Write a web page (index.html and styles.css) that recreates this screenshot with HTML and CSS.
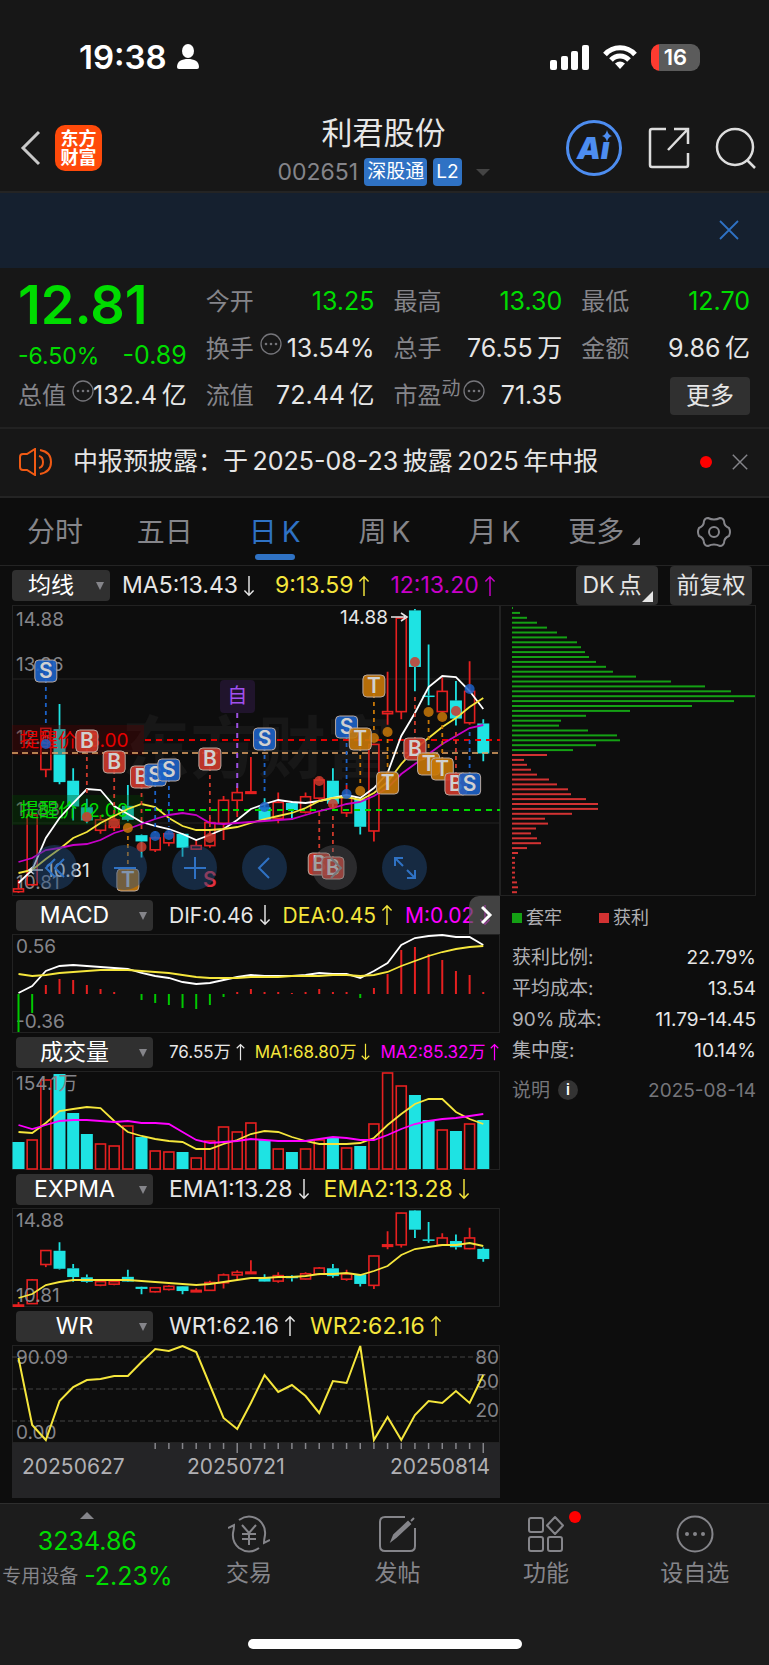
FILE: index.html
```
<!DOCTYPE html>
<html lang="zh-CN">
<head>
  <meta charset="UTF-8">
  <meta name="viewport" content="width=device-width, initial-scale=1.0">
  <title>利君股份 002651</title>
  <link rel="stylesheet" href="styles.css">
</head>
<body>
  <svg class="sprite" aria-hidden="true">
    <symbol id="up" viewBox="0 0 12 24"><path d="M6 23V2M1 7l5-5 5 5" fill="none" stroke="currentColor" stroke-width="1.6"/></symbol>
    <symbol id="down" viewBox="0 0 12 24"><path d="M6 1v21M1 17l5 5 5-5" fill="none" stroke="currentColor" stroke-width="1.6"/></symbol>
    <symbol id="dots" viewBox="0 0 22 22"><circle cx="11" cy="11" r="10" fill="none" stroke="currentColor" stroke-width="1.3"/><g fill="currentColor"><circle cx="6" cy="11" r="1.3"/><circle cx="11" cy="11" r="1.3"/><circle cx="16" cy="11" r="1.3"/></g></symbol>
    <symbol id="close" viewBox="0 0 20 20"><path d="M1 1l18 18M19 1L1 19" fill="none" stroke="currentColor" stroke-width="1.8"/></symbol>
  </svg>

  <header class="header">
    <div class="status">
      <span class="time">19:38</span>
      <svg class="person" width="24" height="26" viewBox="0 0 24 26" fill="#fff"><ellipse cx="12" cy="7" rx="6" ry="7"/><path d="M1 23c0-6 5-8 11-8s11 2 11 8q0 2-2 2H3q-2 0-2-2z"/></svg>
      <div class="status-right">
        <svg width="39" height="25" viewBox="0 0 39 25" fill="#fff"><rect y="15" width="7" height="10" rx="2"/><rect x="11" y="11" width="7" height="14" rx="2"/><rect x="21" y="6" width="7" height="19" rx="2"/><rect x="32" width="7" height="25" rx="2"/></svg>
        <svg width="34" height="25" viewBox="0 0 34 25" fill="none" stroke="#fff" stroke-width="5"><path d="M2 9.500C10 .5 24 .5 32 9.500"/><path d="M8 15c5-5.500 13-5.500 18 0"/><path d="M17 24l-5-5.500q5-4 10 0z" fill="#fff" stroke="none"/></svg>
        <span class="battery">16</span>
      </div>
    </div>
    <div class="title-bar">
      <button class="icon-btn" aria-label="返回"><svg width="22" height="36" viewBox="0 0 22 36"><path d="M20 2L4 18l16 16" fill="none" stroke="#c8c8c8" stroke-width="3"/></svg></button>
      <a class="logo" href="#">东方<br>财富</a>
      <div class="stock">
        <h1>利君股份</h1>
        <div class="stock-sub">
          <span>002651</span>
          <span class="tag">深股通</span>
          <span class="tag">L2</span>
          <i class="caret"></i>
        </div>
      </div>
      <div class="actions">
        <button class="icon-btn" aria-label="Ai"><svg width="58" height="58" viewBox="0 0 58 58"><circle cx="29" cy="29" r="26.500" fill="none" stroke="#4d8df0" stroke-width="3"/><g fill="#4d8df0"><text x="12" y="40" class="ai">Aı</text><path d="M42 11q1 5 5 6-4 1-5 6-1-5-5-6 4-1 5-6z"/></g></svg></button>
        <button class="icon-btn" aria-label="分享"><svg width="42" height="42" viewBox="0 0 42 42" fill="none" stroke="#ddd" stroke-width="2.500"><path d="M18 2H4q-2 0-2 2v34q0 2 2 2h34q2 0 2-2V26M26 2h14v15M40 2L20 23"/></svg></button>
        <button class="icon-btn" aria-label="搜索"><svg width="42" height="42" viewBox="0 0 42 42" fill="none" stroke="#ddd" stroke-width="2.500"><circle cx="20" cy="20" r="18"/><path d="M32 33l8 8"/></svg></button>
      </div>
    </div>
  </header>

  <div class="banner">
    <button class="icon-btn" aria-label="关闭"><svg width="20" height="20"><use href="#close"/></svg></button>
  </div>

  <section class="quote">
    <div class="price">12.81</div>
    <div class="change"><span>-6.50%</span><span class="diff">-0.89</span></div>
    <div class="item"><span class="name">今开</span><b class="down">13.25</b></div>
    <div class="item"><span class="name">最高</span><b class="down">13.30</b></div>
    <div class="item"><span class="name">最低</span><b class="down">12.70</b></div>
    <div class="item"><span class="name">换手</span><svg class="dots"><use href="#dots"/></svg><b>13.54%</b></div>
    <div class="item"><span class="name">总手</span><b>76.55&thinsp;万</b></div>
    <div class="item"><span class="name">金额</span><b>9.86&thinsp;亿</b></div>
    <div class="item"><span class="name">总值</span><svg class="dots"><use href="#dots"/></svg><b>132.4&thinsp;亿</b></div>
    <div class="item"><span class="name">流值</span><b>72.44&thinsp;亿</b></div>
    <div class="item"><span class="name">市盈<sup>动</sup></span><svg class="dots tight"><use href="#dots"/></svg><b>71.35</b></div>
    <div class="item"><button class="more">更多</button></div>
  </section>

  <div class="notice">
    <svg width="34" height="28" viewBox="0 0 34 28" fill="none" stroke="#f05a14" stroke-width="2"><path d="M16 1v26l-8-5H4q-3 0-3-3V9q0-3 3-3h4zM20 8q4 1 4 6t-4 6M21 2q11 2 11 12T21 26"/></svg>
    <a href="#">中报预披露：于&thinsp;2025-08-23&thinsp;披露&thinsp;2025&thinsp;年中报</a>
    <i class="red-dot"></i>
    <button class="icon-btn" aria-label="关闭"><svg width="16" height="16"><use href="#close"/></svg></button>
  </div>

  <nav class="tabs">
    <button>分时</button>
    <button>五日</button>
    <button class="active">日&thinsp;K</button>
    <button>周&thinsp;K</button>
    <button>月&thinsp;K</button>
    <button>更多<i class="corner"></i></button>
    <button aria-label="设置"><svg width="34" height="32" viewBox="0 0 34 32" fill="none" stroke="#85858a" stroke-width="2"><path d="M11 2q6 3 12 0 3 0 4 3 0 5 5 7 2 4 0 8-5 2-5 7-1 3-4 3-6-3-12 0-3 0-4-3 0-5-5-7-2-4 0-8 5-2 5-7 1-3 4-3z"/><circle cx="17" cy="16" r="5"/></svg></button>
  </nav>

  <div class="ma-bar">
    <span class="picker small"><select aria-label="主图指标"><option>均线</option></select></span>
    <span class="val">MA5:13.43<svg><use href="#down"/></svg></span>
    <span class="val yellow">9:13.59<svg><use href="#up"/></svg></span>
    <span class="val dark-magenta">12:13.20<svg><use href="#up"/></svg></span>
    <button class="opt first">DK&thinsp;点<i class="corner"></i></button>
    <button class="opt">前复权</button>
  </div>

  <main class="board">
    <div class="charts">
      <div class="kline">
        <svg id="kline" viewBox="0 0 488 291"></svg>
        <div class="tools">
          <button aria-label="最早"><svg viewBox="0 0 24 24"><path d="M12 3l-9 9 9 9M21 3l-9 9 9 9"/></svg></button>
          <button aria-label="缩小"><svg viewBox="0 0 24 24"><path d="M1 12h22"/></svg></button>
          <button aria-label="放大"><svg viewBox="0 0 24 24"><path d="M1 12h22M12 1v22"/></svg></button>
          <button aria-label="向左"><svg viewBox="0 0 24 24"><path d="M16 2L6 12l10 10"/></svg></button>
          <button class="off" aria-label="向右"><svg viewBox="0 0 24 24"><path d="M8 2l10 10L8 22"/></svg></button>
          <button aria-label="全屏"><svg viewBox="0 0 24 24"><path d="M2 10V2h8M2 2l8 8M22 14v8h-8M22 22l-8-8"/></svg></button>
        </div>
      </div>

      <div class="ind-bar macd">
        <span class="picker"><select aria-label="指标一"><option>MACD</option></select></span>
        <span class="val">DIF:0.46<svg><use href="#down"/></svg></span>
        <span class="val yellow">DEA:0.45<svg><use href="#up"/></svg></span>
        <span class="val magenta">M:0.02<svg><use href="#down"/></svg></span>
        <button class="expand" aria-label="展开"><svg width="12" height="20" viewBox="0 0 12 20"><path d="M1 2l8 8-8 8" fill="none" stroke="#fff" stroke-width="3"/></svg></button>
      </div>
      <svg id="macd" viewBox="0 0 488 99"></svg>

      <div class="ind-bar volume">
        <span class="picker"><select aria-label="指标二"><option>成交量</option></select></span>
        <span class="val">76.55万<svg><use href="#up"/></svg></span>
        <span class="val yellow">MA1:68.80万<svg><use href="#down"/></svg></span>
        <span class="val magenta">MA2:85.32万<svg><use href="#up"/></svg></span>
      </div>
      <svg id="volume" viewBox="0 0 488 99"></svg>

      <div class="ind-bar">
        <span class="picker"><select aria-label="指标三"><option>EXPMA</option></select></span>
        <span class="val">EMA1:13.28<svg><use href="#down"/></svg></span>
        <span class="val yellow">EMA2:13.28<svg><use href="#down"/></svg></span>
      </div>
      <svg id="expma" viewBox="0 0 488 99"></svg>

      <div class="ind-bar">
        <span class="picker"><select aria-label="指标四"><option>WR</option></select></span>
        <span class="val">WR1:62.16<svg><use href="#up"/></svg></span>
        <span class="val yellow">WR2:62.16<svg><use href="#up"/></svg></span>
      </div>
      <svg id="wr" viewBox="0 0 488 98"></svg>
      <div class="axis">
        <svg id="ticks" viewBox="0 0 488 10"></svg>
        <div class="dates"><span>20250627</span><span>20250721</span><span>20250814</span></div>
      </div>
    </div>

    <aside class="chips">
      <svg id="chips" viewBox="0 0 256 291"></svg>
      <div class="legend"><span class="trapped">套牢</span><span class="profit">获利</span></div>
      <dl>
        <div><dt>获利比例:</dt><dd>22.79%</dd></div>
        <div><dt>平均成本:</dt><dd>13.54</dd></div>
        <div><dt>90%&thinsp;成本:</dt><dd>11.79-14.45</dd></div>
        <div><dt>集中度:</dt><dd>10.14%</dd></div>
      </dl>
      <div class="explain"><span>说明</span><i class="info">i</i><time>2025-08-14</time></div>
    </aside>
  </main>

  <footer class="footer">
    <nav class="bottom">
      <a class="sector" href="#">
        <i class="caret-up"></i>
        <span class="index">3234.86</span>
        <span class="sector-row"><small>专用设备</small>-2.23%</span>
      </a>
      <a href="#"><svg viewBox="0 0 42 38" fill="none" stroke="#85858a" stroke-width="2"><path d="M11 5Q21-2 31 5q7 6 6 15-1 5-1 8l6-3M31 33q-10 7-20 0-7-6-6-15 1-4 1-8l-6 3"/><path d="M14 10l7 8 7-8M21 18v12M14 19h14M14 24h14"/></svg>交易</a>
      <a href="#"><svg viewBox="0 0 42 38" fill="none" stroke="#85858a" stroke-width="2"><path d="M28 2H8Q3 2 3 7v24q0 5 5 5h25q5 0 5-5V13"/><path d="M34 6l3-3M15 25l2-5L31 7l2 2-14 13z" fill="#85858a"/></svg>发帖</a>
      <a href="#"><svg viewBox="0 0 42 38" fill="none" stroke="#85858a" stroke-width="2"><rect x="4" y="3" width="14" height="14" rx="2"/><rect x="4" y="22" width="14" height="14" rx="2"/><rect x="23" y="22" width="14" height="14" rx="2"/><path d="M30 2l8 8.500-8 8.500-8-8.500z" stroke-linejoin="round"/></svg>功能<i class="red-dot"></i></a>
      <a href="#"><svg viewBox="0 0 42 38" fill="none" stroke="#85858a" stroke-width="2"><circle cx="21" cy="19" r="17.500"/><g fill="#85858a" stroke="none"><circle cx="13" cy="19" r="2"/><circle cx="21" cy="19" r="2"/><circle cx="29" cy="19" r="2"/></g></svg>设自选</a>
    </nav>
    <div class="home"></div>
  </footer>
  <script src="script.js"></script>
</body>
</html>
```
FILE: styles.css
```
* {
  box-sizing: border-box;
}
body {
  margin: 0;
  background: #0d0d0d;
  color: #e6e6e6;
  font-family: Inter, "Noto Sans CJK SC", sans-serif;
  font-size: 22px;
  line-height: 1;
}
button {
  padding: 0;
  border: none;
  background: none;
  color: inherit;
  font: inherit;
  cursor: pointer;
}
a {
  color: inherit;
  text-decoration: none;
}
svg {
  display: block;
}
.sprite {
  display: none;
}
.icon-btn {
  display: flex;
}

/* header */
.header {
  background: #171717;
  border-bottom: 2px solid #242424;
}
.status {
  display: flex;
  align-items: center;
  height: 114px;
  padding: 0 69px 0 79px;
}
.time {
  margin-right: 9px;
  color: #fff;
  font-size: 33px;
  font-weight: 600;
  line-height: 36px;
}
.status-right {
  display: flex;
  align-items: center;
  gap: 14px;
  margin-left: auto;
}
.battery {
  width: 49px;
  border-radius: 9px;
  background: linear-gradient(90deg, #ff3b30 8px, #5b5b5b 8px);
  color: #fff;
  font-size: 22px;
  font-weight: 600;
  line-height: 27px;
  text-align: center;
}
.title-bar {
  display: flex;
  align-items: center;
  height: 77px;
  padding: 0 12px 10px 19px;
}
.logo {
  width: 47px;
  margin-left: 14px;
  padding: 4px 0;
  border-radius: 10px;
  background: #ff4a0a;
  color: #fff;
  font-size: 18px;
  font-weight: 700;
  line-height: 19px;
  text-align: center;
}
.stock {
  display: flex;
  flex: 1;
  flex-direction: column;
  align-items: center;
  gap: 10px;
  padding: 8px 0 0 100px;
}
.stock h1 {
  margin: 0;
  font-size: 31px;
  font-weight: 400;
}
.stock-sub {
  display: flex;
  align-items: center;
  gap: 6px;
  color: #85858a;
  font-size: 23px;
}
.tag {
  padding: 0 3px;
  border-radius: 4px;
  background: #2f72c4;
  color: #fff;
  font-size: 19px;
  line-height: 28px;
}
.caret {
  margin-left: 8px;
  border: 7px solid transparent;
  border-top-color: #444;
  border-bottom: none;
}
.actions {
  display: flex;
  align-items: center;
  gap: 25px;
}
.ai {
  font-size: 30px;
  font-style: italic;
  font-weight: 900;
}
.banner {
  display: flex;
  align-items: center;
  justify-content: flex-end;
  height: 75px;
  padding: 0 30px 2px 0;
  background: #15202f;
  color: #2f72c4;
}

/* quote */
.quote {
  display: grid;
  grid-template-columns: repeat(4, 1fr);
  grid-template-rows: repeat(3, 47px);
  column-gap: 19px;
  padding: 10px 19px 8px 18px;
  background: #171717;
  border-bottom: 2px solid #222;
}
.price {
  grid-area: 1 / 1;
  color: #00dc00;
  font-size: 54px;
  font-weight: 600;
  line-height: 54px;
}
.change {
  display: flex;
  grid-area: 2 / 1;
  align-items: flex-end;
  justify-content: space-between;
  padding-bottom: 4px;
  color: #00dc00;
  font-size: 23px;
}
.diff {
  font-size: 25px;
}
.item {
  display: flex;
  align-items: center;
  white-space: nowrap;
}
.item .name {
  color: #85858a;
  font-size: 24px;
}
.item sup {
  font-size: 19px;
  line-height: 0;
}
.item b {
  margin-left: auto;
  font-size: 25px;
  font-weight: 400;
}
.item b.down {
  color: #00dc00;
}
.dots {
  flex: none;
  width: 22px;
  height: 22px;
  margin: 0 -8px 10px 6px;
  color: #75757a;
}
.dots.tight {
  margin-left: 2px;
}
.more {
  margin-left: auto;
  padding: 0 16px;
  border-radius: 4px;
  background: #303030;
  font-size: 24px;
  line-height: 38px;
}
.notice {
  display: flex;
  align-items: center;
  height: 69px;
  padding: 0 21px 2px 19px;
  background: #171717;
  border-bottom: 2px solid #242424;
  color: #85858a;
}
.notice a {
  margin: 0 auto 0 20px;
  color: #e6e6e6;
  font-size: 25px;
}
.notice .icon-btn {
  margin-left: 20px;
}
.red-dot {
  width: 12px;
  height: 12px;
  border-radius: 50%;
  background: #f00;
}

/* period tabs */
.tabs {
  display: grid;
  grid-template-columns: repeat(7, 1fr);
  height: 68px;
  border-bottom: 1px solid #242424;
  color: #85858a;
  font-size: 28px;
}
.tabs button {
  position: relative;
  display: flex;
  align-items: center;
  justify-content: center;
}
.tabs .active {
  color: #2f72c4;
}
.tabs .active::after {
  content: "";
  position: absolute;
  bottom: 5px;
  width: 40px;
  height: 6px;
  border-radius: 3px;
  background: #2f72c4;
}
.corner {
  align-self: flex-end;
  margin: 0 0 20px 8px;
  border-bottom: 8px solid currentColor;
  border-left: 8px solid transparent;
}

/* indicator rows */
.ma-bar {
  display: flex;
  align-items: center;
  height: 39px;
  padding: 0 17px 0 12px;
}
.picker {
  position: relative;
  flex: none;
  width: 137px;
  margin-right: 16px;
}
.picker.small {
  width: 98px;
  margin-right: 12px;
}
.picker select {
  width: 100%;
  height: 31px;
  padding: 0 20px 0 0;
  appearance: none;
  border: none;
  border-radius: 4px;
  background: #303030;
  color: #fff;
  font: inherit;
  font-size: 23px;
  text-align-last: center;
}
.picker::after {
  content: "";
  position: absolute;
  top: 12px;
  right: 6px;
  border: 4px solid transparent;
  border-top: 8px solid #85858a;
  border-bottom: none;
}
.val {
  display: flex;
  flex: none;
  align-items: center;
  gap: 5px;
  margin-right: 14px;
  font-size: 23px;
  white-space: nowrap;
}
.ma-bar .val {
  margin-right: 20px;
}
.val svg {
  width: 12px;
  height: 22px;
}
.yellow {
  color: #f5e63c;
}
.magenta {
  color: #f0f;
}
.dark-magenta {
  color: #c800c8;
}
.opt {
  position: relative;
  width: 82px;
  height: 39px;
  margin-left: 12px;
  border-radius: 4px;
  background: #303030;
  font-size: 23px;
  white-space: nowrap;
}
.opt.first {
  padding-right: 10px;
  margin-left: auto;
}
.opt .corner {
  position: absolute;
  right: 5px;
  bottom: 3px;
  margin: 0;
  border-bottom-width: 11px;
  border-left-width: 11px;
}
.ind-bar {
  position: relative;
  display: flex;
  align-items: center;
  height: 38px;
  padding-left: 4px;
}
.macd .val {
  margin-right: 12px;
  font-size: 21px;
}
.volume .val {
  margin-right: 10px;
  font-size: 17px;
}
.volume .val svg {
  width: 9px;
  height: 18px;
}
.expand {
  position: absolute;
  top: 0;
  right: 0;
  width: 31px;
  height: 38px;
  padding-left: 12px;
  border-radius: 10px 0 0 0;
  background: rgba(90, 90, 90, 0.7);
}

/* charts */
.board {
  display: grid;
  grid-template-columns: 488fr 256fr;
  align-items: start;
  padding: 0 13px 5px 12px;
}
.charts > svg,
.kline > svg,
.chips > svg,
.axis > svg {
  width: 100%;
  height: auto;
}
.charts,
.chips {
  min-width: 0;
}
.kline {
  position: relative;
}
.tools {
  position: absolute;
  bottom: 6px;
  left: 20px;
  display: flex;
  gap: 25px;
}
.tools button {
  display: flex;
  align-items: center;
  justify-content: center;
  width: 45px;
  height: 45px;
  border-radius: 50%;
  background: rgba(33, 78, 130, 0.45);
}
.tools svg {
  width: 24px;
  height: 24px;
  fill: none;
  stroke: #2f72c4;
  stroke-width: 2;
}
.tools .off {
  background: rgba(90, 90, 95, 0.4);
}
.tools .off svg {
  stroke: #777;
}
.frame {
  fill: none;
  stroke: #222;
}
.label {
  fill: #85858a;
  font-size: 19px;
}
.white-label {
  fill: #e6e6e6;
  font-size: 19px;
}
.watermark {
  fill: #171717;
  font-size: 68px;
  font-weight: 700;
}
.alert {
  font-size: 19px;
}
.badge {
  font-size: 21px;
  font-weight: 600;
  text-anchor: middle;
}
.badge.plain {
  font-size: 20px;
  font-weight: 400;
}
.axis {
  padding-bottom: 20px;
  background: #242426;
}
.dates {
  display: grid;
  grid-template-columns: 165fr 180fr 123fr;
  padding: 3px 10px 0;
  color: #b0b0b4;
  font-size: 21px;
  line-height: 22px;
}
.dates span:last-child {
  text-align: right;
}

/* cost distribution */
.legend {
  display: flex;
  gap: 37px;
  padding: 12px 12px 0;
  color: #b0b0b4;
  font-size: 18px;
  line-height: 19px;
}
.legend span {
  display: flex;
  align-items: center;
  gap: 4px;
}
.legend span::before {
  content: "";
  width: 10px;
  height: 10px;
  background: #14a014;
}
.legend .profit::before {
  background: #d23232;
}
.chips dl {
  margin: 15px 0 0;
  padding-left: 12px;
  font-size: 19px;
  line-height: 31px;
}
.chips dl div {
  display: flex;
  justify-content: space-between;
}
.chips dt {
  color: #b0b0b4;
}
.chips dd {
  margin: 0;
}
.explain {
  display: flex;
  align-items: center;
  gap: 8px;
  padding: 14px 0 0 12px;
  color: #75757a;
  font-size: 19px;
}
.explain time {
  margin-left: auto;
}
.info {
  width: 20px;
  border-radius: 50%;
  background: #333;
  color: #fff;
  font-size: 15px;
  font-style: normal;
  font-weight: 600;
  line-height: 20px;
  text-align: center;
}

/* bottom bar */
.footer {
  padding-bottom: 17px;
  background: #1c1c1c;
  border-top: 1px solid #2e2e2e;
}
.bottom {
  display: grid;
  grid-template-columns: 174fr repeat(4, 148fr);
  height: 135px;
}
.bottom a {
  position: relative;
  display: flex;
  flex-direction: column;
  align-items: center;
  gap: 9px;
  padding-top: 11px;
  color: #85858a;
  font-size: 23px;
}
.bottom a > svg {
  width: 42px;
  height: 38px;
}
.bottom .red-dot {
  position: absolute;
  top: 7px;
  left: calc(50% + 23px);
}
.bottom .sector {
  gap: 10px;
  padding-top: 8px;
  color: #00dc00;
  font-size: 25px;
}
.caret-up {
  border: 7px solid transparent;
  border-top: none;
  border-bottom-color: #85858a;
}
.sector-row {
  display: flex;
  align-items: center;
  gap: 6px;
  white-space: nowrap;
}
.sector-row small {
  color: #85858a;
  font-size: 19px;
}
.home {
  width: 274px;
  height: 10px;
  margin: 0 auto;
  border-radius: 5px;
  background: #fff;
}
```
FILE: script.js
```
const RED = "#e62020";
const CYAN = "#1ee3e3";
const YELLOW = "#f5e63c";
const MAGENTA = "#c800c8";
const STEP = 13.67;

// [direction, high, body top, body bottom, low]
const candles = [
  [1, 11.00, 10.87, 10.83, 10.81], [1, 11.97, 11.93, 10.93, 10.91], [1, 13.17, 13.17, 12.58, 12.47],
  [0, 13.52, 13.16, 12.40, 12.37], [0, 12.60, 12.42, 12.05, 11.85], [0, 12.16, 12.04, 11.85, 11.81],
  [1, 11.93, 11.86, 11.71, 11.66], [1, 11.93, 11.86, 11.75, 11.70], [0, 12.36, 12.06, 11.86, 11.84],
  [0, 11.65, 11.64, 11.55, 11.32], [1, 11.62, 11.60, 11.43, 11.40], [1, 11.70, 11.66, 11.53, 11.48],
  [0, 11.67, 11.66, 11.46, 11.33], [1, 11.58, 11.49, 11.44, 11.43], [1, 11.90, 11.82, 11.49, 11.46],
  [1, 12.20, 12.14, 11.81, 11.57], [1, 12.34, 12.25, 12.14, 11.90], [1, 12.76, 12.26, 12.25, 12.25],
  [0, 12.17, 12.04, 11.86, 11.85], [1, 12.25, 12.11, 11.88, 11.81], [0, 12.13, 12.10, 12.00, 11.86],
  [1, 12.25, 12.19, 11.97, 11.95], [1, 12.47, 12.43, 12.17, 12.13], [0, 12.60, 12.42, 12.09, 12.02],
  [1, 12.36, 12.18, 11.96, 11.90], [0, 12.17, 12.16, 11.76, 11.65], [1, 12.95, 12.94, 11.70, 11.55],
  [1, 13.98, 13.41, 13.38, 13.22], [1, 14.76, 14.75, 13.41, 13.30], [0, 14.88, 14.86, 14.05, 13.70],
  [0, 14.37, 13.64, 13.62, 13.50], [1, 13.90, 13.70, 13.41, 13.40], [0, 13.85, 13.57, 13.31, 13.21],
  [1, 14.13, 13.70, 13.25, 13.22], [0, 13.30, 13.24, 12.81, 12.70]
];
const ma5 = [278, 265, 233, 213, 198, 184, 185, 201, 209, 217, 221, 224, 229, 235, 230, 224, 215, 204, 199, 195, 197, 198, 196, 193, 190, 193, 183, 168, 131, 108, 82, 71, 72, 86, 104];
const ma9 = [268, 265, 254, 244, 233, 227, 218, 211, 204, 199, 202, 213, 221, 225, 225, 224, 222, 218, 214, 211, 208, 203, 196, 193, 192, 195, 188, 177, 159, 144, 133, 122, 113, 102, 93];
const ma12 = [257, 253, 245, 243, 240, 239, 235, 228, 224, 219, 214, 210, 208, 210, 218, 219, 218, 217, 216, 215, 214, 210, 206, 203, 199, 197, 191, 183, 169, 159, 149, 139, 131, 123, 120];
const hist = [-38, -19, 9, 15, 14, 9, 5, 2, 0, -6, -9, -11, -14, -15, -11, -3, 2, 5, 2, 2, 1, 2, 5, 2, 2, -4, 6, 20, 44, 47, 40, 34, 23, 19, 2];
const dif = [59, 52, 37, 32, 31, 32, 33, 34, 35, 39, 42, 44, 48, 50, 49, 46, 43, 41, 42, 42, 42, 41, 39, 40, 40, 44, 37, 29, 11, 4, 2, 1, 3, 3, 11];
const dea = [40, 42, 41, 39, 38, 37, 36, 36, 36, 37, 38, 39, 41, 43, 44, 44, 44, 43, 43, 43, 42, 42, 42, 41, 41, 42, 41, 38, 32, 27, 22, 18, 15, 13, 12];
// negative volume is a falling day
const vol = [-27, 30, 90, -95, -56, -35, 26, 24, 44, -32, 19, 18, -17, 12, 29, 43, 38, 47, -29, 21, -17, 21, 30, -31, 22, -23, 46, 97, 84, -74, -49, 40, -38, 46, -49];
const volMa1 = [61, 62, 52, 40, 38, 36, 37, 50, 61, 65, 68, 70, 71, 78, 78, 73, 69, 63, 60, 61, 66, 70, 73, 73, 73, 72, 67, 54, 43, 33, 28, 28, 41, 48, 53];
const volMa2 = [54, 58, 54, 50, 49, 49, 50, 51, 50, 52, 52, 53, 61, 69, 72, 71, 70, 68, 69, 70, 70, 70, 68, 66, 67, 69, 69, 64, 58, 53, 50, 48, 47, 45, 43];
const ema = [90, 86, 77, 74, 72, 72, 72, 72, 72, 73, 74, 75, 76, 77, 76, 74, 72, 70, 70, 69, 69, 68, 66, 66, 65, 67, 63, 58, 47, 41, 39, 37, 37, 35, 38];
const wr = [13, 80, 95, 56, 42, 35, 34, 31, 31, 17, 4, 6, 1, 7, 40, 73, 84, 58, 30, 47, 40, 51, 68, 36, 38, 1, 95, 72, 95, 70, 56, 58, 46, 58, 30];
const trapped = [1, 8, 15, 25, 35, 45, 55, 65, 69, 73, 77, 84, 94, 101, 124, 159, 193, 219, 243, 222, 180, 118, 74, 49, 47, 76, 105, 108, 84, 61];
const profit = [35, 12, 15, 19, 25, 37, 45, 56, 59, 74, 86, 86, 60, 33, 36, 24, 19, 25, 29, 15, 6, 3, 3, 3, 3, 3, 5, 6, 5];

// [type, candle index, badge y, dot y, y where the dashed stem starts on the candle side]
const marks = [
  ["S", 2, 66, 139, 118], ["B", 5, 136, 212, 188], ["B", 7, 157, 218, 212], ["B", 9, 172, 242, 226], ["S", 10, 170, 231, 228],
  ["S", 11, 165, 230, 222], ["B", 14, 154, 233, 229], ["T", 8, 275, 223, 228], ["S", 18, 134, 202, 186], ["B", 22, 259, 176, 204],
  ["B", 23, 263, 199, 210], ["S", 24, 122, 189, 180], ["T", 25, 134, 186, 182], ["T", 26, 81, 133, 129], ["T", 27, 178, 127, 132],
  ["B", 29, 144, 57, 92], ["T", 30, 159, 107, 112], ["T", 31, 164, 112, 117], ["B", 32, 179, 106, 127], ["S", 33, 179, 84, 124]
];
const markColors = { S: "#1c62c8", B: "#cf3a2c", T: "#c87808" };

const x = i => 6.5 + i * STEP;
const frame = h => `<rect class="frame" x="0.5" y="0.5" width="487" height="${h - 1}"/>`;
const hline = (y, color, dash, from = 0, w = 1) =>
  `<path d="M${from} ${y}H488" stroke="${color}" stroke-width="${w}" stroke-dasharray="${dash}"/>`;
const line = (ys, color, w = 1.8) =>
  `<polyline points="${ys.map((y, i) => x(i) + "," + y).join(" ")}" fill="none" stroke="${color}" stroke-width="${w}"/>`;
const label = (tx, ty, text, cls = "label", extra = "") => `<text class="${cls}" x="${tx}" y="${ty}" ${extra}>${text}</text>`;

function drawCandles(top, scale) {
  const y = p => top + (14.88 - p) * scale;
  return candles.map(([up, high, t, b, low], i) => {
    const color = up ? RED : CYAN;
    const h = Math.max(y(b) - y(t), 1.5);
    const body = up
      ? `<rect x="${x(i) - 5}" y="${y(t)}" width="10" height="${h}" fill="none" stroke="${RED}" stroke-width="1.6"/>`
      : `<rect x="${x(i) - 6}" y="${y(t)}" width="12" height="${h}" fill="${CYAN}"/>`;
    return `<path d="M${x(i)} ${y(high)}V${y(t)}M${x(i)} ${y(b)}V${y(low)}" stroke="${color}" stroke-width="1.8"/>` + body;
  }).join("");
}

function drawMarks() {
  const stems = marks.map(([type, i, by, dy, end]) =>
    `<path d="M${x(i)} ${by}V${end}" stroke="${markColors[type]}" stroke-width="1.8" stroke-dasharray="4 4"/>
     <circle cx="${x(i)}" cy="${dy}" r="5" fill="${markColors[type]}" fill-opacity="0.85"/>`).join("");
  const boxes = marks.map(([type, i, by]) =>
    `<rect x="${x(i) - 11}" y="${by - 11}" width="22" height="22" rx="4" fill="${markColors[type]}" fill-opacity="0.9" stroke="#b9a9a0"/>
     <text class="badge" x="${x(i)}" y="${by + 7}" fill="#d0d0d0">${type}</text>`).join("");
  return stems + boxes;
}

function alertLine(y, color, bg, text) {
  return `<rect y="${y - 15}" width="132" height="30" fill="${bg}"/>` +
    hline(y, color, "6 5", 133, 1.8) + label(8, y + 7, text, "alert", `fill="${color}"`);
}

document.getElementById("kline").innerHTML =
  label(110, 168, "东方财富", "watermark") +
  frame(291) + hline(74, "#242424", "none") + hline(146, "#242424", "none") + hline(218, "#242424", "none") +
  label(4, 21, "14.88") + label(4, 66, "13.86") + label(4, 139, "12.84") + label(4, 211, "11.83") + label(4, 284, "10.81") +
  drawCandles(4, 69.8) +
  alertLine(135, "#e60000", "rgba(90,0,0,0.35)", "提醒价&#8201;13.00") +
  alertLine(205, "#00dc00", "rgba(0,70,0,0.35)", "提醒价&#8201;12.00") +
  hline(148, "#e8a868", "6 4", 0, 1.6) +
  line(ma5, "#fff") + line(ma9, YELLOW) + line(ma12, MAGENTA) +
  `<path d="M${x(16)} 108V183" stroke="#9b50e0" stroke-width="2" stroke-dasharray="5 5"/>
   <rect x="208" y="75" width="35" height="33" rx="4" fill="#20142c"/>` +
  label(x(16), 98, "自", "badge plain", 'fill="#a050f0"') +
  drawMarks() + label(x(14), 282, "S", "badge", 'fill="#e03040"') +
  label(34, 272, "10.81", "white-label") + label(328, 19, "14.88", "white-label") +
  `<path d="M31 265H17M22 261l-5 4 5 4M379 12h14M389 8l6 4-6 4" fill="none" stroke="#e6e6e6" stroke-width="1.6"/>`;

document.getElementById("macd").innerHTML = frame(99) +
  label(4, 19, "0.56") + label(4, 94, "-0.36") +
  hist.map((v, i) => `<path d="M${x(i)} 60v${-v}" stroke="${v > 0 ? RED : "#00c800"}" stroke-width="2"/>`).join("") +
  line(dif, "#fff") + line(dea, YELLOW);

document.getElementById("volume").innerHTML = frame(99) +
  vol.map((v, i) => v > 0
    ? `<rect x="${x(i) - 5}" y="${99 - v}" width="10" height="${v - 1}" fill="none" stroke="${RED}" stroke-width="1.6"/>`
    : `<rect x="${x(i) - 6}" y="${98 + v}" width="12" height="${-v}" fill="${CYAN}"/>`).join("") +
  label(4, 19, "154.1万") + line(volMa1, YELLOW) + line(volMa2, "#f0f");

document.getElementById("expma").innerHTML = frame(99) +
  drawCandles(2, 23.7) + label(4, 19, "14.88") + label(4, 94, "10.81") + line(ema, YELLOW);

document.getElementById("wr").innerHTML = frame(98) +
  hline(12, "#444", "5 3") + hline(44, "#444", "5 3") + hline(76, "#444", "5 3") +
  label(4, 19, "90.09") + label(4, 94, "0.00") +
  label(487, 19, "80", "label", 'text-anchor="end"') + label(487, 43, "50", "label", 'text-anchor="end"') +
  label(487, 72, "20", "label", 'text-anchor="end"') + line(wr, YELLOW, 2);

document.getElementById("ticks").innerHTML = wr.map((v, i) =>
  i < 10 ? "" : `<path d="M${x(i)} 0v${i === 16 || i === 34 ? 10 : 6}" stroke="#85858a" stroke-width="1.5"/>`).join("");

document.getElementById("chips").innerHTML =
  '<rect class="frame" x="0.5" y="0.5" width="255" height="290"/>' +
  trapped.concat(profit).map((w, i) =>
    `<rect x="12" y="${2 + i * 4.9}" width="${w}" height="2" fill="${i < trapped.length ? "#14a014" : "#d23232"}"/>`).join("");
```
